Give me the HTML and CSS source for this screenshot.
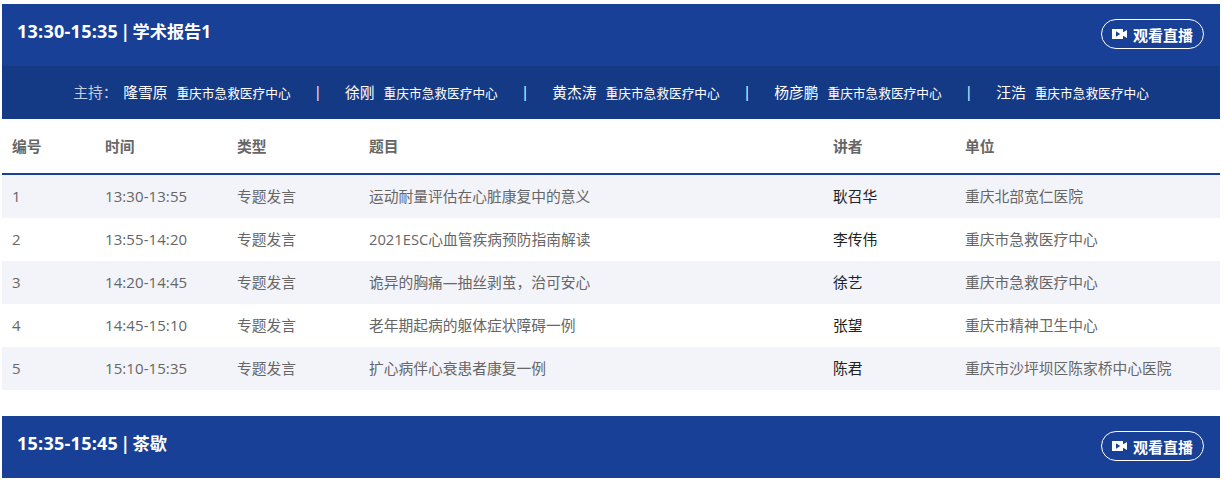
FILE: index.html
```html
<!DOCTYPE html>
<html lang="zh-CN">
<head>
<meta charset="utf-8">
<title>日程</title>
<link rel="stylesheet" href="styles.css">
</head>
<body>
<section class="session">
  <header class="session-head">
    <h2 class="session-title"><span class="clock">13:30-15:35</span> | 学术报告1</h2>
    <a class="live-btn"><svg class="live-icon" viewBox="0 0 15 10"><path d="M0 0h11v3.2L15 1v8l-4-2.2V10H0z" fill="#fff"/><path d="M4 2.3v5.4L8.2 5z" fill="#17408f"/></svg>观看直播</a>
  </header>
  <div class="hosts">
    <span class="hosts-label">主持：</span>
    <span class="host"><b>隆雪原</b><i>重庆市急救医疗中心</i></span>
    <span class="sep">|</span>
    <span class="host"><b>徐刚</b><i>重庆市急救医疗中心</i></span>
    <span class="sep">|</span>
    <span class="host"><b>黄杰涛</b><i>重庆市急救医疗中心</i></span>
    <span class="sep">|</span>
    <span class="host"><b>杨彦鹏</b><i>重庆市急救医疗中心</i></span>
    <span class="sep">|</span>
    <span class="host"><b>汪浩</b><i>重庆市急救医疗中心</i></span>
  </div>
  <table class="agenda">
    <colgroup><col class="c-no"><col class="c-std"><col class="c-std"><col class="c-topic"><col class="c-std"><col></colgroup>
    <thead>
      <tr><th>编号</th><th>时间</th><th>类型</th><th>题目</th><th>讲者</th><th>单位</th></tr>
    </thead>
    <tbody>
      <tr><td class="num">1</td><td class="num">13:30-13:55</td><td>专题发言</td><td>运动耐量评估在心脏康复中的意义</td><td class="speaker">耿召华</td><td>重庆北部宽仁医院</td></tr>
      <tr><td class="num">2</td><td class="num">13:55-14:20</td><td>专题发言</td><td>2021ESC心血管疾病预防指南解读</td><td class="speaker">李传伟</td><td>重庆市急救医疗中心</td></tr>
      <tr><td class="num">3</td><td class="num">14:20-14:45</td><td>专题发言</td><td>诡异的胸痛—抽丝剥茧，治可安心</td><td class="speaker">徐艺</td><td>重庆市急救医疗中心</td></tr>
      <tr><td class="num">4</td><td class="num">14:45-15:10</td><td>专题发言</td><td>老年期起病的躯体症状障碍一例</td><td class="speaker">张望</td><td>重庆市精神卫生中心</td></tr>
      <tr><td class="num">5</td><td class="num">15:10-15:35</td><td>专题发言</td><td>扩心病伴心衰患者康复一例</td><td class="speaker">陈君</td><td>重庆市沙坪坝区陈家桥中心医院</td></tr>
    </tbody>
  </table>
</section>
<section class="session">
  <header class="session-head">
    <h2 class="session-title"><span class="clock">15:35-15:45</span> | 茶歇</h2>
    <a class="live-btn"><svg class="live-icon" viewBox="0 0 15 10"><path d="M0 0h11v3.2L15 1v8l-4-2.2V10H0z" fill="#fff"/><path d="M4 2.3v5.4L8.2 5z" fill="#17408f"/></svg>观看直播</a>
  </header>
</section>
</body>
</html>
```
FILE: styles.css
```css
* { box-sizing: border-box; }
html, body { height: 480px; overflow: hidden; }
body {
  margin: 0;
  padding: 4px 4px 0 2px;
  background: #fff;
  font-family: "Open Sans", "Noto Sans CJK SC", sans-serif;
  font-size: 14.75px;
  color: #666;
}
.session { margin-bottom: 26px; }
.session-head {
  height: 62px;
  background: #174096;
  display: flex;
  align-items: flex-start;
  justify-content: space-between;
  padding: 15px 16px 0 15px;
}
.session-title {
  margin: 0;
  color: #fff;
  font-size: 17.2px;
  font-weight: 700;
  line-height: 25px;
  word-spacing: -2px;
}
.clock { font-size: 18px; letter-spacing: .25px; }
.live-btn {
  margin-top: 0;
  width: 103px;
  height: 30px;
  border: 1px solid #fff;
  border-radius: 15px;
  display: flex;
  align-items: center;
  justify-content: center;
  gap: 6px;
  color: #fff;
  font-size: 15px;
  font-weight: 700;
}
.live-icon { width: 15px; height: 10px; flex: none; }
.hosts {
  height: 53px;
  background: #153a85;
  display: flex;
  align-items: center;
  justify-content: center;
  padding-bottom: 3px;
  color: #fff;
  white-space: nowrap;
}
.hosts-label { color: #c3cde3; width: 50px; }
.host b { font-weight: 400; }
.host i { font-style: normal; font-size: 12.7px; margin-left: 9px; }
.sep { width: 54.5px; text-align: center; }
.agenda {
  width: 100%;
  border-collapse: separate;
  border-spacing: 0;
  table-layout: fixed;
}
.c-no { width: 93px; }
.c-std { width: 132px; }
.c-topic { width: 464px; }
.agenda th {
  height: 56px;
  padding: 0 10px 2px;
  text-align: left;
  font-weight: 700;
  font-size: 14.75px;
  color: #666;
  border-bottom: 2px solid #174096;
}
.agenda td {
  height: 43px;
  padding: 0 10px 2px;
  white-space: nowrap;
}
.agenda .num { font-size: 15px; letter-spacing: .08px; }
.agenda tbody tr:nth-child(odd) { background: #f3f4fa; }
.agenda .speaker { color: #222; }
```
